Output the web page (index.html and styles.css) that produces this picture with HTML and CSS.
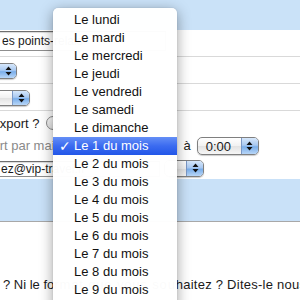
FILE: index.html
```html
<!DOCTYPE html>
<html lang="fr">
<head>
  <meta charset="UTF-8">
  <title>Export</title>
  <link rel="stylesheet" href="styles.css">
</head>
<body>
  <!-- Top strip -->
  <div class="top-strip"></div>

  <!-- Settings rows -->
  <div class="settings">
    <div class="row ruled">
      <div class="field field-points">es points-relais</div>
    </div>
    <div class="row ruled">
      <div class="popup popup-a"><span class="popup-label">CSV</span><span class="popup-arrows"><svg width="7" height="10" viewBox="0 0 7 10"><path d="M3.5 0.5L6.5 4H0.5Z M3.5 9.5L6.5 6H0.5Z" fill="#111"/></svg></span></div>
    </div>
    <div class="row ruled">
      <div class="popup popup-b"><span class="popup-label">UTF-8</span><span class="popup-arrows"><svg width="7" height="10" viewBox="0 0 7 10"><path d="M3.5 0.5L6.5 4H0.5Z M3.5 9.5L6.5 6H0.5Z" fill="#111"/></svg></span></div>
    </div>
    <div class="row row-radio">
      <span class="label label-export">Export ?</span>
      <span class="radio"></span>
    </div>
    <div class="row row-time">
      <span class="label label-mail">Export par mail</span>
      <div class="popup popup-freq"><span class="popup-label">Le 1 du mois</span></div>
      <span class="label label-a">à</span>
      <div class="popup popup-time"><span class="popup-label">0:00</span><span class="popup-arrows"><svg width="7" height="10" viewBox="0 0 7 10"><path d="M3.5 0.5L6.5 4H0.5Z M3.5 9.5L6.5 6H0.5Z" fill="#111"/></svg></span></div>
    </div>
    <div class="row row-mail">
      <div class="field field-mail">ez@vip-travel.fr</div>
      <div class="popup popup-c"><span class="popup-label"></span><span class="popup-arrows"><svg width="7" height="10" viewBox="0 0 7 10"><path d="M3.5 0.5L6.5 4H0.5Z M3.5 9.5L6.5 6H0.5Z" fill="#111"/></svg></span></div>
    </div>
  </div>

  <!-- Blue band -->
  <div class="band"></div>

  <p class="note">? Ni le fo<span class="note-under">rmat que vous sou</span><span class="note-tail">haitez ? Dites-le nous</span></p>

  <!-- Open popup menu -->
  <ul class="menu">
    <li>Le lundi</li>
    <li>Le mardi</li>
    <li>Le mercredi</li>
    <li>Le jeudi</li>
    <li>Le vendredi</li>
    <li>Le samedi</li>
    <li>Le dimanche</li>
    <li class="selected">Le 1 du mois</li>
    <li>Le 2 du mois</li>
    <li>Le 3 du mois</li>
    <li>Le 4 du mois</li>
    <li>Le 5 du mois</li>
    <li>Le 6 du mois</li>
    <li>Le 7 du mois</li>
    <li>Le 8 du mois</li>
    <li>Le 9 du mois</li>
    <li>Le 10 du mois</li>
  </ul>
</body>
</html>
```

FILE: styles.css
```css
/* Global Styles */
body {
  margin: 0;
  width: 300px;
  height: 300px;
  overflow: hidden;
  position: relative;
  font-family: 'Liberation Sans', Arial, sans-serif;
  font-size: 13px;
  color: #1a1a1a;
  background-color: #fff;
}

/* Top strip */
.top-strip {
  height: 30px;
  background-color: #cae2f8;
}

/* Rows */
.settings {
  display: flex;
  flex-direction: column;
}

.row {
  display: flex;
  align-items: center;
  height: 26px;
  white-space: nowrap;
}

.row.ruled {
  border-bottom: 1px solid #d9d9d9;
}

.row-radio {
  height: 24px;
}

.row-time {
  height: 21px;
}

.row-mail {
  height: 23px;
}

/* Text fields */
.field {
  box-sizing: border-box;
  height: 20px;
  line-height: 18px;
  border: 1px solid #8e8e8e;
  border-top-color: #6f6f6f;
  background-color: #fff;
  font-size: 12px;
  overflow: hidden;
  box-shadow: inset 0 1px 1px rgba(0, 0, 0, 0.15);
}

.field-points {
  width: 170px;
  margin-left: -4px;
  padding-left: 5px;
  margin-top: 2px;
  margin-bottom: 6px;
}

.field-mail {
  width: 164px;
  height: 16px;
  line-height: 14px;
  margin-left: -4px;
  padding-left: 4px;
  font-size: 12px;
  margin-top: 3px;
}

/* Aqua popup buttons */
.popup {
  box-sizing: border-box;
  display: flex;
  align-items: stretch;
  height: 16px;
  border: 1px solid #7f7f7f;
  border-radius: 5px;
  background: linear-gradient(#ffffff, #f1f1f1 50%, #e2e2e2 51%, #f6f6f6);
  box-shadow: 0 1px 1px rgba(0, 0, 0, 0.2);
  overflow: hidden;
  font-size: 12px;
}

.popup-label {
  flex: 1;
  padding-left: 8px;
  line-height: 15px;
}

.popup-arrows {
  width: 16px;
  display: flex;
  align-items: center;
  justify-content: center;
  border-left: 1px solid #7b98c6;
  background: linear-gradient(#d6e7fb, #a9c9f1 45%, #7aaeea 55%, #b8d6f7);
}

.popup-a {
  width: 70px;
  margin-left: -53px;
  margin-top: 2px;
}

.popup-b {
  width: 84px;
  margin-left: -54px;
  margin-top: 2px;
}

.popup-freq {
  width: 112px;
  margin-left: 8px;
}

.popup-time {
  width: 62px;
  height: 18px;
  margin-left: 6px;
  font-size: 13px;
}

.popup-time .popup-label {
  line-height: 17px;
}

.popup-c {
  width: 40px;
  height: 17px;
  margin-left: 4px;
  margin-top: 1px;
}

/* Labels */
.label-export {
  margin-left: -9px;
}

.label-mail {
  margin-left: -30px;
  color: #8a8a8a;
}

.label-a {
  margin-left: 6px;
}

.radio {
  box-sizing: border-box;
  width: 14px;
  height: 14px;
  margin-left: 7px;
  border: 1px solid #8a8a8a;
  border-radius: 50%;
  background: linear-gradient(#fdfdfd, #e4e4e4);
}

/* Blue band */
.band {
  height: 42px;
  background-color: #c9e1f8;
  border-bottom: 1px solid #a8a8a8;
}

.note {
  margin: 55px 0 0 3px;
  white-space: nowrap;
  line-height: 16px;
}

.note-under {
  letter-spacing: 0.85px;
}

.note-tail {
  letter-spacing: 0.25px;
}

/* Open menu */
.menu {
  position: absolute;
  top: 8px;
  left: 53px;
  width: 124px;
  margin: 0;
  padding: 3px 0 0;
  list-style: none;
  background-color: rgba(255, 255, 255, 0.98);
  border-radius: 5px 5px 0 0;
  box-shadow: 0 3px 14px rgba(0, 0, 0, 0.38), 0 0 1px rgba(0, 0, 0, 0.3);
}

.menu li {
  height: 18px;
  line-height: 18px;
  padding-left: 21px;
  color: #111;
  white-space: nowrap;
  position: relative;
}

.menu li.selected {
  color: #fff;
  background: linear-gradient(#648ff6, #3b6bf0 50%, #2256e8);
}

.menu li.selected::before {
  content: "\2713";
  position: absolute;
  left: 6px;
  font-weight: bold;
  font-family: 'DejaVu Sans', sans-serif;
  font-size: 14px;
}
```
